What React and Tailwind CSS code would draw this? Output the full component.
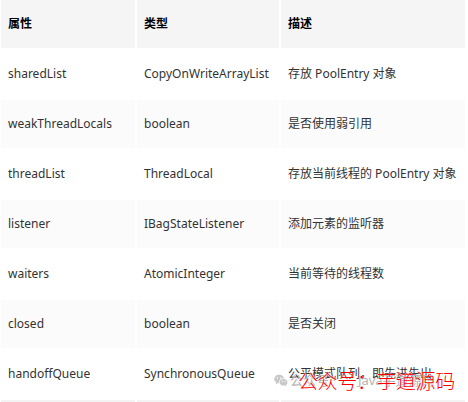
import React from "react";

const rows = [
  ["sharedList", "CopyOnWriteArrayList", "存放 PoolEntry 对象"],
  ["weakThreadLocals", "boolean", "是否使用弱引用"],
  ["threadList", "ThreadLocal", "存放当前线程的 PoolEntry 对象"],
  ["listener", "IBagStateListener", "添加元素的监听器"],
  ["waiters", "AtomicInteger", "当前等待的线程数"],
  ["closed", "boolean", "是否关闭"],
  ["handoffQueue", "SynchronousQueue", "公平模式队列，即先进先出"],
];

function WeChatIcon() {
  return (
    <svg width="14" height="13" viewBox="0 0 14 13" className="block">
      <ellipse cx="5.2" cy="5" rx="5" ry="4.3" fill="#c8c8c8" />
      <path d="M2 8.2 L1.6 10.4 L4 9" fill="#c8c8c8" />
      <ellipse cx="9.6" cy="8.3" rx="4.2" ry="3.6" fill="#c8c8c8" stroke="#fff" strokeWidth="0.8" />
      <path d="M11.8 11.2 L12.4 12.8 L10.4 11.6" fill="#c8c8c8" />
      <circle cx="3.4" cy="4" r="0.7" fill="#fff" />
      <circle cx="6.8" cy="4" r="0.7" fill="#fff" />
      <circle cx="8.4" cy="7.6" r="0.6" fill="#fff" />
      <circle cx="11" cy="7.6" r="0.6" fill="#fff" />
    </svg>
  );
}

export default function App() {
  const font = { fontFamily: '"Noto Sans", "Noto Sans CJK SC", sans-serif' };
  return (
    <div className="relative w-[468px] h-[402px] bg-white overflow-hidden" style={font}>
      <div className="grid grid-cols-[134px_142px_184px] gap-[2px] ml-[1px]">
        {["属性", "类型", "描述"].map((h) => (
          <div key={h} className="h-[48px] flex items-center px-[7px] bg-[#f5f5f5] text-[12px] font-bold text-black">
            {h}
          </div>
        ))}
        {rows.map((r, i) =>
          r.map((c, j) => (
            <div
              key={i + "-" + j}
              className={
                "h-[48px] flex items-center px-[7px] text-[12px] text-[#333333] whitespace-nowrap " +
                (i % 2 === 1 ? "bg-[#fbfbfb]" : "bg-white")
              }
            >
              {c}
            </div>
          ))
        )}
        <div className="h-[4px] bg-[#f3f3f3]" />
        <div className="h-[4px] bg-[#f3f3f3]" />
        <div className="h-[4px] bg-[#f3f3f3]" />
      </div>

      <div className="absolute left-[274px] top-[374px] flex items-center">
        <WeChatIcon />
        <span className="ml-[2px] text-[13px] text-[#b4b4b4] leading-none">公众号 ·</span>
        <span className="ml-[22px] text-[13px] text-[#b4b4b4] leading-none">Java芋道源码</span>
      </div>
      <div className="absolute left-[298px] top-[370px] text-[20px] leading-[24px] font-light tracking-[-0.4px] text-[#ff0000] whitespace-nowrap [text-shadow:0_0_1px_#fff,0_0_1px_#fff]">
        公众号：芋道源码
      </div>
    </div>
  );
}
